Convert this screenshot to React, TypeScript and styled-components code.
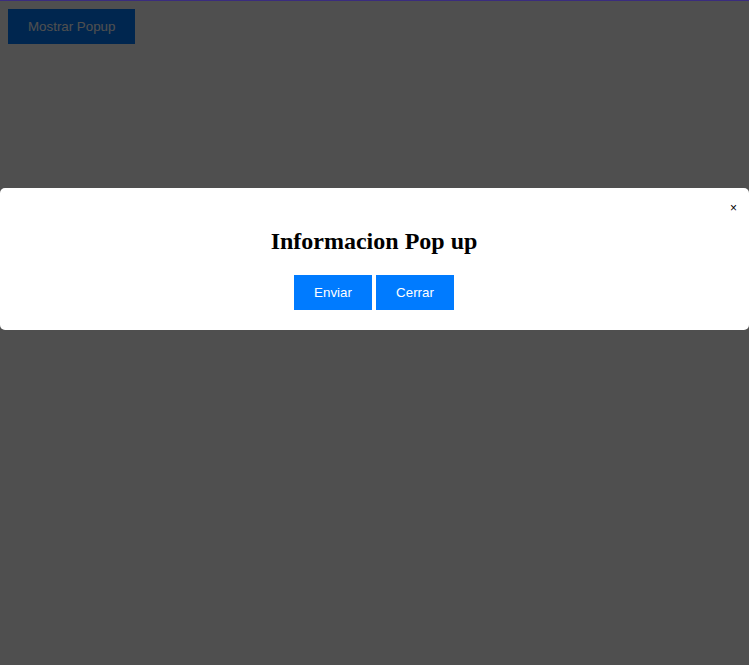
import React, { useState } from 'react';
import styled, { createGlobalStyle } from 'styled-components';

const GlobalStyle = createGlobalStyle`
  html, body {
    margin: 0;
    padding: 0;
    background: #ffffff;
  }
  body {
    padding: 9px 8px 8px;
    font-family: "Liberation Serif", serif;
  }
`;

const ActionButton = styled.button`
  background: #007bff;
  color: #ffffff;
  border: none;
  padding: 10px 20px;
  min-width: 78px;
  font-family: "Liberation Sans", Arial, sans-serif;
  font-size: 13.333px;
  line-height: 15px;
  cursor: pointer;
`;

const Overlay = styled.div`
  position: fixed;
  inset: 0;
  background: rgba(0, 0, 0, 0.69);
  border-top: 1px solid #3a2c7e;
  display: flex;
  flex-direction: column;
  padding-top: 187px;
`;

const Modal = styled.div`
  position: relative;
  background: #ffffff;
  border-radius: 5px;
  padding: 20px 21px 20px 20px;
  text-align: center;
`;

const Title = styled.h2`
  margin: 20px 0;
  font-family: "Liberation Serif", serif;
  font-size: 24px;
  font-weight: bold;
  line-height: 27px;
  color: #000000;
`;

const Actions = styled.div`
  display: flex;
  justify-content: center;
  gap: 4px;
`;

const CloseButton = styled.button`
  position: absolute;
  top: 14px;
  right: 12px;
  background: none;
  border: none;
  padding: 0;
  font-family: "Liberation Sans", Arial, sans-serif;
  font-size: 12px;
  line-height: 12px;
  color: #000000;
  cursor: pointer;
`;

const App: React.FC = () => {
  const [open, setOpen] = useState(true);

  return (
    <>
      <GlobalStyle />
      <ActionButton onClick={() => setOpen(true)}>Mostrar Popup</ActionButton>
      {open && (
        <Overlay>
          <Modal>
            <CloseButton onClick={() => setOpen(false)}>×</CloseButton>
            <Title>Informacion Pop up</Title>
            <Actions>
              <ActionButton>Enviar</ActionButton>
              <ActionButton onClick={() => setOpen(false)}>Cerrar</ActionButton>
            </Actions>
          </Modal>
        </Overlay>
      )}
    </>
  );
};

export default App;
